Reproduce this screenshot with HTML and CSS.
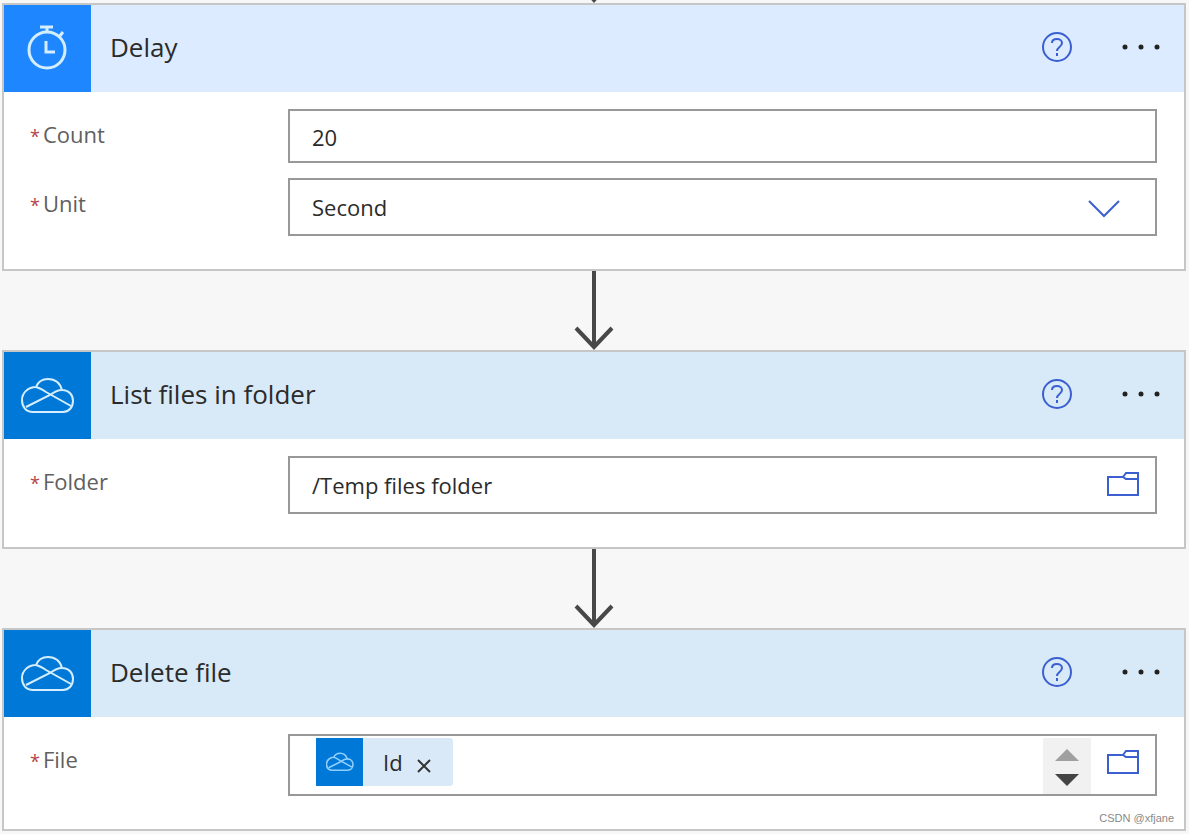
FILE: index.html
```html
<!DOCTYPE html>
<html lang="en">
<head>
    <meta charset="UTF-8">
    <meta name="viewport" content="width=device-width, initial-scale=1.0">
    <title>Flow steps</title>
    <link rel="stylesheet" href="styles.css">
</head>
<body>
    <!-- shared icons -->
    <svg class="sprite" aria-hidden="true">
        <symbol id="cloud" viewBox="0 0 54 38">
            <path d="M12 35 C5 35 1 30 1 23 C1 16 7 10 15 10 C17 5 21 2 27 2 C34 2 39 6 41 13 C48 13 52 18 52 24 C52 30 48 35 42 35 Z"/>
            <path d="M15 10 C19 11 22 13 25 15 L50 29 M5 30 L29 18 C33 15 37 13 41 13"/>
        </symbol>
        <symbol id="help" viewBox="0 0 32 32">
            <circle cx="16" cy="16" r="14"/>
            <path d="M11 12 C11 9 13 8 16 8 C19 8 21 10 21 12 C21 16 16 16 16 20 M16 22 V25"/>
        </symbol>
        <symbol id="dots" viewBox="0 0 40 6">
            <circle cx="4" cy="3" r="2.5"/>
            <circle cx="20" cy="3" r="2.5"/>
            <circle cx="36" cy="3" r="2.5"/>
        </symbol>
        <symbol id="folder" viewBox="0 0 34 26">
            <path d="M32 8 V24 H2 V6 H17 M17 6 L20 2 H32 V8 H20 Z"/>
        </symbol>
        <symbol id="arrow" viewBox="0 0 40 79">
            <path d="M20 0 V76 M2 57 L20 76 L38 57"/>
        </symbol>
    </svg>

    <main class="flow">
        <div class="connector connector-top"><svg><use href="#arrow"/></svg></div>

        <section class="card card-delay">
            <header class="card-header">
                <span class="card-icon">
                    <svg class="timer" viewBox="0 0 42 48">
                        <circle cx="20" cy="27" r="18"/>
                        <path d="M13 4 H26 M20 4 V9 M32 14 L36 9 M19 18 V29 H28"/>
                    </svg>
                </span>
                <h2>Delay</h2>
                <button class="icon-button help" type="button" aria-label="Help"><svg><use href="#help"/></svg></button>
                <button class="icon-button dots" type="button" aria-label="More"><svg><use href="#dots"/></svg></button>
            </header>
            <div class="card-body">
                <label for="count"><span class="required">*</span>Count</label>
                <input class="field field-short" type="text" id="count" value="20">
                <label for="unit"><span class="required">*</span>Unit</label>
                <div class="select-wrap">
                    <select class="field" id="unit">
                        <option>Second</option>
                        <option>Minute</option>
                        <option>Hour</option>
                    </select>
                    <svg class="chevron" viewBox="0 0 32 18"><path d="M1 1 L16 16 L31 1"/></svg>
                </div>
            </div>
        </section>

        <div class="connector"><svg><use href="#arrow"/></svg></div>

        <section class="card">
            <header class="card-header">
                <span class="card-icon"><svg class="cloud"><use href="#cloud"/></svg></span>
                <h2>List files in folder</h2>
                <button class="icon-button help" type="button" aria-label="Help"><svg><use href="#help"/></svg></button>
                <button class="icon-button dots" type="button" aria-label="More"><svg><use href="#dots"/></svg></button>
            </header>
            <div class="card-body">
                <label for="folder-path"><span class="required">*</span>Folder</label>
                <div class="field field-group">
                    <input type="text" id="folder-path" value="/Temp files folder">
                    <button class="icon-button folder" type="button" aria-label="Browse"><svg><use href="#folder"/></svg></button>
                </div>
            </div>
        </section>

        <div class="connector"><svg><use href="#arrow"/></svg></div>

        <section class="card">
            <header class="card-header">
                <span class="card-icon"><svg class="cloud"><use href="#cloud"/></svg></span>
                <h2>Delete file</h2>
                <button class="icon-button help" type="button" aria-label="Help"><svg><use href="#help"/></svg></button>
                <button class="icon-button dots" type="button" aria-label="More"><svg><use href="#dots"/></svg></button>
            </header>
            <div class="card-body">
                <label for="file"><span class="required">*</span>File</label>
                <div class="field field-group field-tall">
                    <span class="token">
                        <span class="token-icon"><svg><use href="#cloud"/></svg></span>
                        <span class="token-text">Id</span>
                        <button class="token-remove" type="button" aria-label="Remove">
                            <svg viewBox="0 0 14 14"><path d="M1 1 L13 13 M13 1 L1 13"/></svg>
                        </button>
                    </span>
                    <input type="text" id="file">
                    <span class="scroller">
                        <button type="button" aria-label="Scroll up"><svg viewBox="0 0 24 12"><path d="M0 12 L12 0 L24 12 Z"/></svg></button>
                        <button class="active" type="button" aria-label="Scroll down"><svg viewBox="0 0 24 12"><path d="M0 0 L12 12 L24 0 Z"/></svg></button>
                    </span>
                    <button class="icon-button folder" type="button" aria-label="Browse"><svg><use href="#folder"/></svg></button>
                </div>
            </div>
            <span class="watermark">CSDN @xfjane</span>
        </section>
    </main>
</body>
</html>
```

FILE: styles.css
```css
:root {
    --blue: #3b5fd0;
    --onedrive: #0078d7;
    --border: #c6c6c6;
    --field-border: #989898;
}
* {
    box-sizing: border-box;
}
body {
    margin: 0;
    background-color: #f7f7f7;
    color: #2b2b2b;
    font-family: "Open Sans", "Noto Sans", sans-serif;
    font-size: 22px;
}
svg {
    display: block;
    fill: none;
}
button {
    padding: 0;
    border: none;
    background: none;
    cursor: pointer;
}
.sprite {
    position: absolute;
    width: 0;
    height: 0;
}
.flow {
    padding: 0 3px 3px 2px;
}

/* arrows between the cards */
.connector {
    display: flex;
    justify-content: center;
    align-items: flex-end;
    height: 79px;
    overflow: hidden;
}
.connector svg {
    flex: none;
    width: 40px;
    height: 79px;
    stroke: #484848;
    stroke-width: 4;
}
.connector-top {
    height: 3px;
}

.card {
    position: relative;
    background-color: white;
    border: 2px solid var(--border);
}
.card-header {
    display: flex;
    align-items: center;
    height: 87px;
    padding: 0 23px 3px 0;
    background-color: #d8e9f7;
}
.card-delay .card-header {
    background-color: #dcebff;
}
.card-icon {
    display: flex;
    align-items: center;
    justify-content: center;
    align-self: flex-start;
    width: 87px;
    height: 87px;
    background-color: var(--onedrive);
}
.card-delay .card-icon {
    background-color: #1e87ff;
}
.card-icon svg {
    stroke: #d4eeff;
    stroke-width: 2;
}
.cloud {
    width: 54px;
    height: 38px;
}
.timer {
    width: 42px;
    height: 48px;
}
.card-icon .timer {
    margin-bottom: 3px;
    stroke-width: 3;
}
h2 {
    flex: 1;
    margin: 0;
    padding-left: 19px;
    font-size: 26px;
    font-weight: 400;
}
.help svg {
    width: 32px;
    height: 32px;
    stroke: var(--blue);
    stroke-width: 2;
}
.dots {
    margin-left: 48px;
}
.dots svg {
    width: 40px;
    height: 6px;
    fill: #222;
}

.card-body {
    display: grid;
    grid-template-columns: 258px 1fr;
    row-gap: 15px;
    padding: 17px 27px 33px 26px;
}
label {
    padding-top: 9px;
    line-height: 32px;
    color: #606060;
}
.required {
    margin-right: 3px;
    color: #b5444a;
    font-size: 18px;
}
.field {
    width: 100%;
    height: 58px;
    padding: 0 22px;
    border: 2px solid var(--field-border);
    border-radius: 0;
    background-color: white;
    color: inherit;
    font: inherit;
}
.field-short {
    height: 54px;
    padding-top: 2px;
}
.field-tall {
    height: 62px;
}
.select-wrap {
    position: relative;
}
select.field {
    display: block;
    appearance: none;
}
.chevron {
    position: absolute;
    top: 22px;
    right: 37px;
    width: 32px;
    height: 18px;
    stroke: var(--blue);
    stroke-width: 2;
    pointer-events: none;
}
.field-group {
    display: flex;
    align-items: center;
    padding-right: 15px;
}
.field-group input {
    flex: 1;
    min-width: 0;
    padding: 0;
    border: none;
    background: none;
    color: inherit;
    font: inherit;
}
.folder {
    align-self: flex-start;
    margin-top: 13px;
}
.folder svg {
    width: 34px;
    height: 26px;
    stroke: var(--blue);
    stroke-width: 2;
}

.token {
    display: flex;
    align-items: center;
    align-self: flex-start;
    height: 48px;
    margin: 2px 4px;
    padding-right: 22px;
    border-radius: 3px;
    background-color: #d9e9f7;
}
.token-icon {
    display: flex;
    align-items: center;
    justify-content: center;
    width: 47px;
    height: 48px;
    margin-right: 20px;
    background-color: var(--onedrive);
}
.token-icon svg {
    width: 28px;
    height: 20px;
    stroke: #8fd0ff;
    stroke-width: 3;
}
.token-remove {
    margin-left: 14px;
    padding-top: 8px;
}
.token-remove svg {
    width: 14px;
    height: 14px;
    stroke: #333;
    stroke-width: 2;
}
.scroller {
    display: flex;
    flex-direction: column;
    align-items: center;
    justify-content: flex-end;
    gap: 13px;
    align-self: stretch;
    width: 48px;
    margin: 2px 15px 0 0;
    padding-bottom: 8px;
    background-color: #f1f1f1;
}
.scroller svg {
    width: 24px;
    height: 12px;
    fill: #a0a0a0;
}
.scroller .active svg {
    fill: #444;
}

.watermark {
    position: absolute;
    right: 10px;
    bottom: 4px;
    color: #8a8a8a;
    font: 11px/14px "Liberation Sans", Arial, sans-serif;
}
```
